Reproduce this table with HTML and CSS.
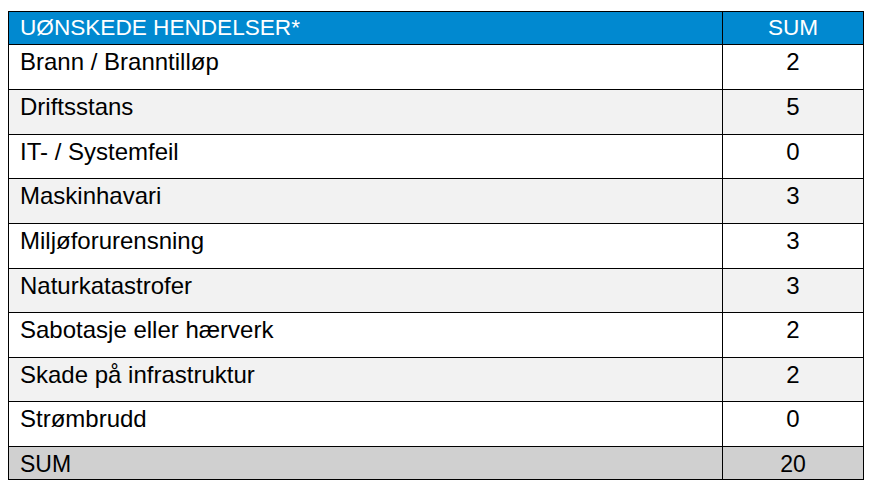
FILE: index.html
```html
<!DOCTYPE html>
<html lang="no">
<head>
<meta charset="utf-8">
<title>Uønskede hendelser</title>
<link rel="stylesheet" href="styles.css">
</head>
<body>
<div class="table">
  <div class="cell head label">UØNSKEDE HENDELSER*</div>
  <div class="cell head num">SUM</div>

  <div class="cell label">Brann / Branntilløp</div>
  <div class="cell num">2</div>

  <div class="cell label alt">Driftsstans</div>
  <div class="cell num alt">5</div>

  <div class="cell label">IT- / Systemfeil</div>
  <div class="cell num">0</div>

  <div class="cell label alt">Maskinhavari</div>
  <div class="cell num alt">3</div>

  <div class="cell label">Miljøforurensning</div>
  <div class="cell num">3</div>

  <div class="cell label alt">Naturkatastrofer</div>
  <div class="cell num alt">3</div>

  <div class="cell label">Sabotasje eller hærverk</div>
  <div class="cell num">2</div>

  <div class="cell label alt">Skade på infrastruktur</div>
  <div class="cell num alt">2</div>

  <div class="cell label">Strømbrudd</div>
  <div class="cell num">0</div>

  <div class="cell label total">SUM</div>
  <div class="cell num total">20</div>
</div>
</body>
</html>
```

FILE: styles.css
```css
html, body {
  margin: 0;
  padding: 0;
  background: #ffffff;
}

body {
  padding: 11px 0 0 8px;
  font-family: "Liberation Sans", Arial, sans-serif;
}

.table {
  width: 856px;
  box-sizing: border-box;
  display: grid;
  grid-template-columns: 713px 140px;
  grid-template-rows: 32px 44px 44px 43px 44px 44px 43px 44px 43px 44px 32px;
  gap: 1px;
  border: 1px solid #000000;
  background: #000000;
}

.cell {
  background: #ffffff;
  color: #000000;
  font-size: 24px;
  line-height: 24px;
  padding-top: 5px;
  box-sizing: border-box;
  white-space: nowrap;
}

.label {
  padding-left: 11px;
}

.num {
  text-align: center;
}

.alt {
  background: #f2f2f2;
}

.head {
  background: #0189d0;
  color: #ffffff;
  font-size: 22.6px;
  line-height: 23px;
  padding-top: 4px;
}

.total {
  background: #d0d0d0;
  padding-top: 6px;
  font-size: 23px;
  line-height: 23px;
}
```
